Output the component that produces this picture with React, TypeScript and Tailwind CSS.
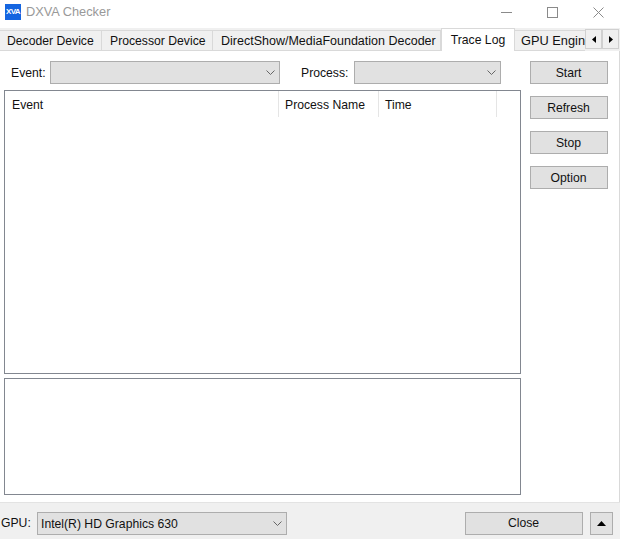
import type { ReactNode } from 'react';

const tabs = [
  { label: 'Decoder Device', width: 'w-[102px]', text: 'pl-[7px]' },
  { label: 'Processor Device', width: 'w-[111px]', text: 'pl-[8px]' },
  { label: 'DirectShow/MediaFoundation Decoder', width: 'w-[228px]', text: 'pl-[8px] text-[12.5px]' },
];

function Select({ className, children }: { className: string; children?: ReactNode }) {
  return (
    <div
      className={`flex h-[23px] items-center justify-between border border-[#adadad] bg-[#e1e1e1] pr-[4px] pl-[3px] ${className}`}
    >
      <span className="pt-[1px]">{children}</span>
      <svg width="9" height="5" viewBox="0 0 9 5">
        <path d="M0.5 0.5L4.5 4.5L8.5 0.5" fill="none" stroke="#666666" />
      </svg>
    </div>
  );
}

function ActionButton({ label, className }: { label: string; className: string }) {
  return (
    <button
      type="button"
      className={`flex h-[23px] items-center justify-center border border-[#adadad] bg-[#e1e1e1] pr-[1px] ${className}`}
    >
      {label}
    </button>
  );
}

function ScrollArrow({ dir }: { dir: 'left' | 'right' }) {
  return (
    <div className="flex h-[20px] w-[17px] items-center justify-center border border-[#d0d0d0] bg-[#f0f0f0]">
      <svg width="4" height="7" viewBox="0 0 4 7">
        <path d={dir === 'left' ? 'M4 0V7L0 3.5Z' : 'M0 0V7L4 3.5Z'} fill="#000" />
      </svg>
    </div>
  );
}

function TitleBar() {
  return (
    <div className="flex h-[28px] items-center bg-white pb-[4px]">
      <div className="ml-[5px] flex h-[16px] w-[16px] items-center justify-center bg-[#1565e0] text-[8px] leading-none font-bold tracking-[-0.6px] text-white">
        XVA
      </div>
      <span className="ml-[5px] pt-[1px] text-[12.8px] text-[#999999]">DXVA Checker</span>
      <div className="ml-auto flex items-center gap-[35px] pr-[16px]">
        <svg width="11" height="11" viewBox="0 0 11 11">
          <path d="M0 5.5H11" stroke="#8a8a8a" />
        </svg>
        <svg width="11" height="11" viewBox="0 0 11 11">
          <rect x="0.5" y="0.5" width="10" height="10" fill="none" stroke="#8a8a8a" />
        </svg>
        <svg width="11" height="11" viewBox="0 0 11 11">
          <path d="M0.5 0.5L10.5 10.5M10.5 0.5L0.5 10.5" stroke="#8a8a8a" />
        </svg>
      </div>
    </div>
  );
}

function TabStrip() {
  return (
    <div className="flex h-[23px] items-end overflow-hidden">
      {tabs.map((tab) => (
        <div
          key={tab.label}
          className={`flex h-[21px] items-center border-t border-r border-b border-[#d9d9d9] bg-[#f0f0f0] pt-[1px] whitespace-nowrap ${tab.width} ${tab.text}`}
        >
          {tab.label}
        </div>
      ))}
      <div className="flex h-[23px] w-[74px] items-center justify-center border-t border-r border-l border-[#d9d9d9] bg-white whitespace-nowrap">
        Trace Log
      </div>
      <div className="flex h-[21px] w-[70px] items-center overflow-hidden border-t border-b border-[#d9d9d9] bg-[#f0f0f0] pt-[1px] pl-[6px] text-[12.8px] whitespace-nowrap">
        GPU Engine
      </div>
      <div className="mb-[2px] flex shrink-0">
        <ScrollArrow dir="left" />
        <ScrollArrow dir="right" />
      </div>
    </div>
  );
}

function TraceLogPage() {
  return (
    <div className="flex h-[451px] border-r border-[#d9d9d9] bg-white pt-[10px]">
      <div className="flex w-[521px] flex-col pl-[4px]">
        <div className="flex h-[23px] items-center">
          <span className="ml-[7px] w-[39px] pt-[1px]">Event:</span>
          <Select className="w-[230px]" />
          <span className="ml-[21px] w-[53px] pt-[1px]">Process:</span>
          <Select className="w-[147px]" />
        </div>
        <div className="mt-[6px] h-[284px] border border-[#828790]">
          <div className="flex h-[26px] items-center">
            <span className="h-full w-[274px] border-r border-[#e5e5e5] pt-[8px] pl-[7px]">Event</span>
            <span className="h-full w-[100px] border-r border-[#e5e5e5] pt-[8px] pl-[6px]">Process Name</span>
            <span className="h-full w-[118px] border-r border-[#e5e5e5] pt-[8px] pl-[6px]">Time</span>
          </div>
        </div>
        <div className="mt-[4px] h-[117px] border border-[#828790]" />
      </div>
      <div className="ml-[9px] flex flex-col gap-[12px]">
        <ActionButton label="Start" className="w-[78px] pt-[2px]" />
        <ActionButton label="Refresh" className="w-[78px] pt-[2px]" />
        <ActionButton label="Stop" className="w-[78px] pt-[2px]" />
        <ActionButton label="Option" className="w-[78px] pt-[2px]" />
      </div>
    </div>
  );
}

function Footer() {
  return (
    <div className="flex flex-1 items-center border-t border-[#e3e3e3] bg-[#f0f0f0] pt-[5px]">
      <span className="ml-[1px] w-[36px]">GPU:</span>
      <Select className="w-[250px]">Intel(R) HD Graphics 630</Select>
      <ActionButton label="Close" className="ml-[178px] w-[118px]" />
      <button
        type="button"
        className="ml-[7px] flex h-[23px] w-[23px] items-center justify-center border border-[#adadad] bg-[#e1e1e1]"
      >
        <svg width="9" height="5" viewBox="0 0 9 5">
          <path d="M0 5L4.5 0L9 5Z" fill="#000" />
        </svg>
      </button>
    </div>
  );
}

export default function App() {
  return (
    <div className="flex h-[539px] w-[620px] flex-col overflow-hidden bg-[#f0f0f0] font-['Liberation_Sans',Arial,sans-serif] text-[12.2px] leading-none text-[#111111]">
      <TitleBar />
      <TabStrip />
      <TraceLogPage />
      <Footer />
    </div>
  );
}
